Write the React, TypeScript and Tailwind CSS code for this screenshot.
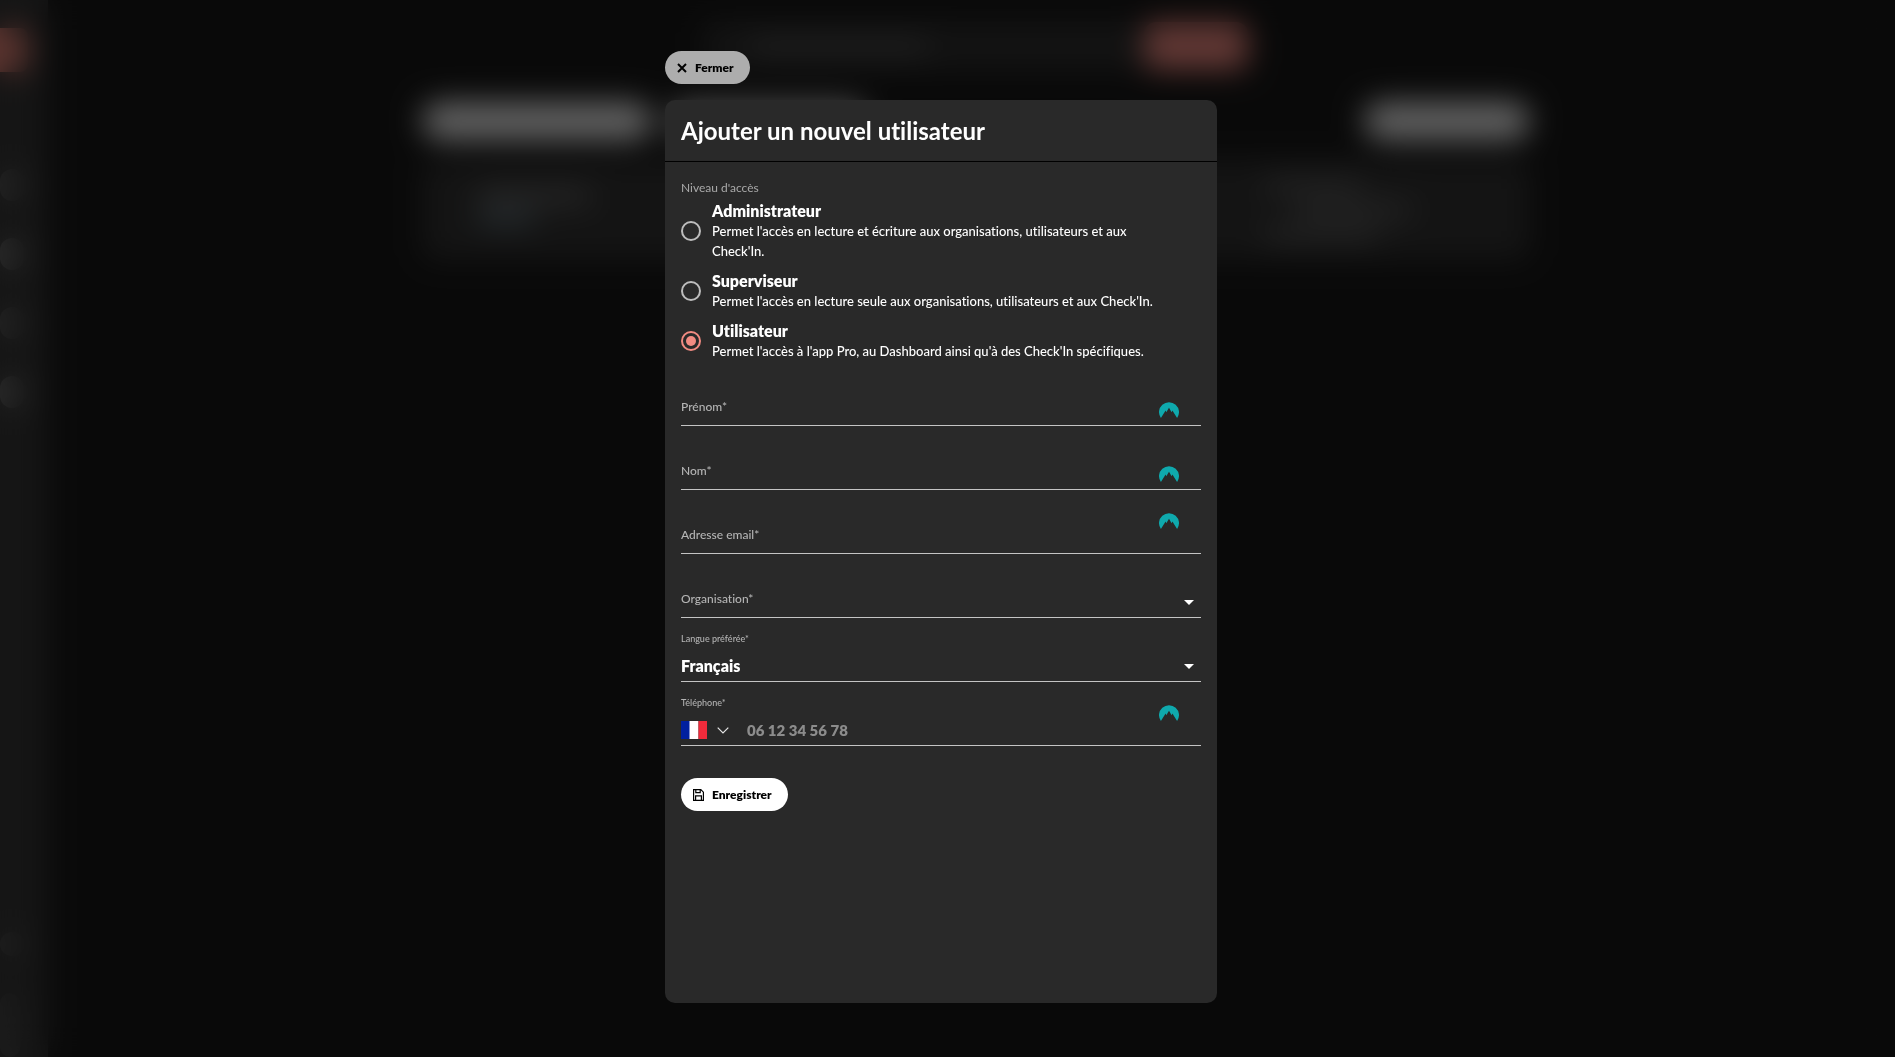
import type { ReactNode } from 'react';

const levels = [
  {
    id: 'admin',
    name: 'Administrateur',
    text: "Permet l'accès en lecture et écriture aux organisations, utilisateurs et aux Check'In.",
  },
  {
    id: 'supervisor',
    name: 'Superviseur',
    text: "Permet l'accès en lecture seule aux organisations, utilisateurs et aux Check'In.",
  },
  {
    id: 'user',
    name: 'Utilisateur',
    text: "Permet l'accès à l'app Pro, au Dashboard ainsi qu'à des Check'In spécifiques.",
  },
];

function VaultIcon({ className }: { className: string }) {
  return (
    <svg viewBox="0 0 20 16" className={`absolute right-[22px] h-4 w-5 ${className}`} aria-hidden="true">
      <path
        fill="#0fa9ad"
        d="M1.9 16A10 10 0 1 1 18.1 16L13.4 8.6L12.6 10.2L10 5.8L7.3 10.2L6.6 8.6Z"
      />
    </svg>
  );
}

function Caret() {
  return (
    <svg viewBox="0 0 10 5" className="pointer-events-none absolute right-[7px] bottom-3 h-[5px] w-2.5" aria-hidden="true">
      <path d="M0 0h10L5 5z" fill="#fff" />
    </svg>
  );
}

function Field({ children }: { children: ReactNode }) {
  return <div className="relative flex h-16 flex-col justify-end border-b border-[#c4c4c4]">{children}</div>;
}

function TextField({ id, label, type = 'text', iconClass }: { id: string; label: string; type?: string; iconClass: string }) {
  return (
    <Field>
      <label htmlFor={id} className="absolute bottom-2 left-0 text-xs leading-5 font-medium text-[#b4b4b4]">
        {label}
      </label>
      <input id={id} type={type} className="h-8 w-full bg-transparent text-base font-extrabold text-white outline-none" />
      <VaultIcon className={iconClass} />
    </Field>
  );
}

function Backdrop() {
  return (
    <div className="absolute inset-0 overflow-hidden" aria-hidden="true">
      <div className="flex h-full bg-[#181818]">
        <div className="flex w-12 flex-col items-start gap-[37px] bg-[#363636] pt-7">
          <div className="mb-[60px] h-11 w-7 rounded-r-lg bg-[#e08074]" />
          <div className="h-8 w-6 rounded-full bg-[#555555]" />
          <div className="h-8 w-6 rounded-full bg-[#666666]" />
          <div className="h-8 w-6 rounded-full bg-[#555555]" />
          <div className="h-8 w-6 rounded-full bg-[#666666]" />
          <div className="mt-auto h-6 w-6 rounded-full bg-[#4c4c4c]" />
          <div className="h-16 w-5 rounded-full bg-[#444444]" />
        </div>
        <div className="flex flex-1 flex-col items-center pt-[22px] pr-8 pl-10">
          <div className="flex h-12 w-[545px] items-center justify-between rounded-xl bg-[#303030]">
            <div className="ml-12 h-4 w-44 bg-[#505050]" />
            <div className="h-12 w-[104px] rounded-xl bg-[#f28b82]" />
          </div>
          <div className="mt-8 flex w-full max-w-[1108px] gap-4">
            <div className="h-[38px] w-[230px] rounded-full bg-[#f4f4f4]" />
            <div className="h-[38px] w-[200px] rounded-full bg-[#b8b8b8]" />
            <div className="ml-auto h-[38px] w-[166px] rounded-full bg-[#f4f4f4]" />
          </div>
          <div className="mt-5 flex h-[100px] w-full max-w-[1108px] items-center justify-between rounded-xl bg-[#333333] px-14">
            <div className="flex flex-col gap-1 pb-2">
              <div className="h-5 w-28 bg-[#5c5c5c]" />
              <div className="h-4 w-14 bg-[#5c6c74]" />
            </div>
            <div className="mr-16 flex flex-col gap-2">
              <div className="h-4 w-24 bg-[#585858]" />
              <div className="ml-8 h-4 w-28 bg-[#5c5c5c]" />
              <div className="h-4 w-28 bg-[#585858]" />
            </div>
          </div>
        </div>
      </div>
      <div className="absolute inset-0 bg-black/60 backdrop-blur-[15px]" />
    </div>
  );
}

export default function App() {
  return (
    <div className="relative min-h-screen bg-[#090909] font-['Lato',sans-serif] [font-variant-ligatures:none]">
      <Backdrop />
      <main className="relative flex min-h-screen flex-col items-center pt-[51px] pr-[13px] pb-[54px]">
        <div className="flex w-full max-w-[552px] flex-1 flex-col items-start gap-4">
          <button type="button" className="flex h-[33px] items-center gap-2 rounded-full bg-[#adadad] pr-4 pl-3 text-xs font-extrabold text-black">
            <svg viewBox="0 0 10 10" className="h-2.5 w-2.5" aria-hidden="true">
              <path d="M1 1l8 8M9 1l-8 8" stroke="currentColor" strokeWidth="2" fill="none" />
            </svg>
            Fermer
          </button>

          <section role="dialog" aria-labelledby="dialog-title" className="w-full flex-1 rounded-[10px] bg-[#292929] text-white">
            <header className="flex h-[62px] items-center border-b border-black px-4">
              <h1 id="dialog-title" className="text-2xl font-bold">
                Ajouter un nouvel utilisateur
              </h1>
            </header>

            <form className="px-4 pt-4 pb-8">
              <fieldset>
                <legend className="text-xs leading-5 text-[#a9a9a9]">Niveau d'accès</legend>
                <div className="flex flex-col gap-2.5 pt-[3px] pb-px">
                  {levels.map((l) => (
                    <div key={l.id} className="flex items-center gap-[11px]">
                      <input
                        type="radio"
                        id={l.id}
                        name="level"
                        defaultChecked={l.id === 'user'}
                        className="grid h-5 w-5 shrink-0 appearance-none place-items-center rounded-full border-2 border-[#bdbdbd] before:h-2.5 before:w-2.5 before:rounded-full checked:border-[#f28b82] checked:before:bg-[#f28b82]"
                      />
                      <label htmlFor={l.id} className="max-w-[460px] text-[13px] leading-5 font-medium">
                        <span className="block text-base leading-5 font-extrabold">{l.name}</span>
                        {l.text}
                      </label>
                    </div>
                  ))}
                </div>
              </fieldset>

              <TextField id="firstname" label="Prénom*" iconClass="top-10" />
              <TextField id="lastname" label="Nom*" iconClass="top-10" />
              <TextField id="email" label="Adresse email*" type="email" iconClass="top-[23px]" />

              <Field>
                <label htmlFor="organisation" className="absolute bottom-2 left-0 text-xs leading-5 font-medium text-[#b4b4b4]">
                  Organisation*
                </label>
                <select id="organisation" defaultValue="" className="h-8 w-full appearance-none bg-transparent text-base font-extrabold text-white outline-none">
                  <option value="" />
                </select>
                <Caret />
              </Field>

              <Field>
                <label htmlFor="language" className="text-[9px] leading-4 font-medium text-[#b4b4b4]">
                  Langue préférée*
                </label>
                <select id="language" defaultValue="fr" className="mt-1 h-[30px] w-full appearance-none bg-transparent text-base font-extrabold text-white outline-none">
                  <option value="fr">Français</option>
                </select>
                <Caret />
              </Field>

              <Field>
                <label htmlFor="phone" className="text-[9px] leading-4 font-medium text-[#b4b4b4]">
                  Téléphone*
                </label>
                <div className="mt-1 flex h-[30px] items-center">
                  <button type="button" aria-label="Indicatif : France" className="flex items-center gap-2.5">
                    <svg viewBox="0 0 26 18" className="h-[18px] w-[26px]" aria-hidden="true">
                      <path d="M0 0h9v18H0z" fill="#00209f" />
                      <path d="M8.5 0h9v18h-9z" fill="#fff" />
                      <path d="M17.5 0H26v18h-8.500z" fill="#ef2b3b" />
                    </svg>
                    <svg viewBox="0 0 12 7" className="h-[7px] w-3" aria-hidden="true">
                      <path d="M0.700 0.700L6 6L11.300 0.700" stroke="#e6e6e6" strokeWidth="1.200" fill="none" />
                    </svg>
                  </button>
                  <input
                    id="phone"
                    type="tel"
                    placeholder="06 12 34 56 78"
                    className="ml-[18px] h-full flex-1 bg-transparent text-[15px] font-extrabold text-white outline-none placeholder:text-[#8c8c8c]"
                  />
                </div>
                <VaultIcon className="top-[23px]" />
              </Field>

              <button type="submit" className="mt-8 flex h-[33px] items-center gap-2 rounded-full bg-white pr-4 pl-3 text-xs font-extrabold text-black">
                <svg viewBox="0 0 11 12" className="h-3 w-[11px]" fill="none" stroke="currentColor" strokeWidth="1.200" aria-hidden="true">
                  <path d="M.6 .6H7.800L10.400 3.200V11.400H.6zM2.800 .6V3.600H7.200V.6M2.600 11.400V6.800H8.400V11.400" />
                </svg>
                Enregistrer
              </button>
            </form>
          </section>
        </div>
      </main>
    </div>
  );
}
